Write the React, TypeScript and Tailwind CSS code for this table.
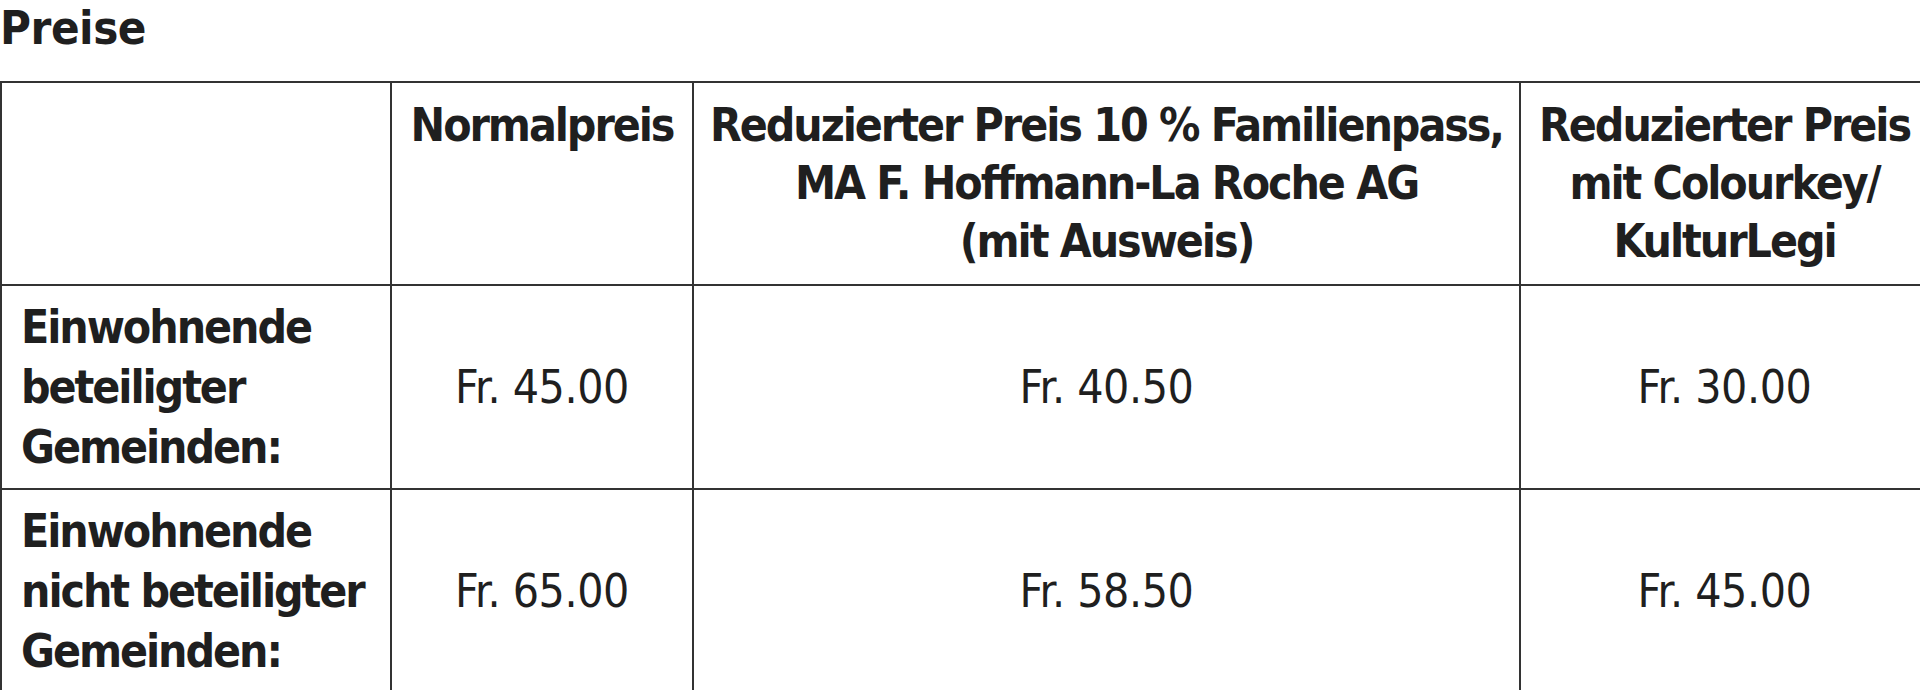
const rows = [
    { label: ['Einwohnende', 'beteiligter', 'Gemeinden:'], prices: ['Fr. 45.00', 'Fr. 40.50', 'Fr. 30.00'] },
    { label: ['Einwohnende', 'nicht beteiligter', 'Gemeinden:'], prices: ['Fr. 65.00', 'Fr. 58.50', 'Fr. 45.00'] },
]

const font = { fontFamily: '"DejaVu Sans Condensed", "Liberation Sans", sans-serif' }

const cell = 'border-2 border-[#333]'
const head = `${cell} align-top text-center font-bold tracking-[-0.045em] whitespace-nowrap pt-[13px] px-0`

export default function App() {
    return <div className="w-[1920px] h-[690px] overflow-hidden bg-white text-[#1f1f1f]" style={font}>
        <h2 className="text-[47px] font-bold tracking-[-0.01em] leading-[56px] h-[81px]">Preise</h2>
        <table className="table-fixed border-collapse w-[1928px] text-[46px] leading-[58px]">
            <colgroup>
                <col className="w-[390px]" />
                <col className="w-[302px]" />
                <col className="w-[827px]" />
                <col className="w-[409px]" />
            </colgroup>
            <thead>
                <tr className="h-[203px]">
                    <th className={cell}></th>
                    <th className={head}>Normalpreis</th>
                    <th className={head}>
                        Reduzierter Preis 10 % Familienpass,<br />MA F. Hoffmann-La Roche AG<br />(mit Ausweis)
                    </th>
                    <th className={head}>
                        Reduzierter Preis<br />mit Colourkey/<br />KulturLegi
                    </th>
                </tr>
            </thead>
            <tbody>
                {rows.map((r, i) => <tr key={i} className="h-[204px]">
                    <th className={`${cell} text-left font-bold tracking-[-0.045em] leading-[60px] whitespace-nowrap align-middle pl-[19px] pr-0`}>
                        {r.label.map((l, j) => <div key={j}>{l}</div>)}
                    </th>
                    {r.prices.map((p, j) => <td key={j} className={`${cell} text-center align-middle tracking-[-0.01em]`}>{p}</td>)}
                </tr>)}
            </tbody>
        </table>
    </div>
}
